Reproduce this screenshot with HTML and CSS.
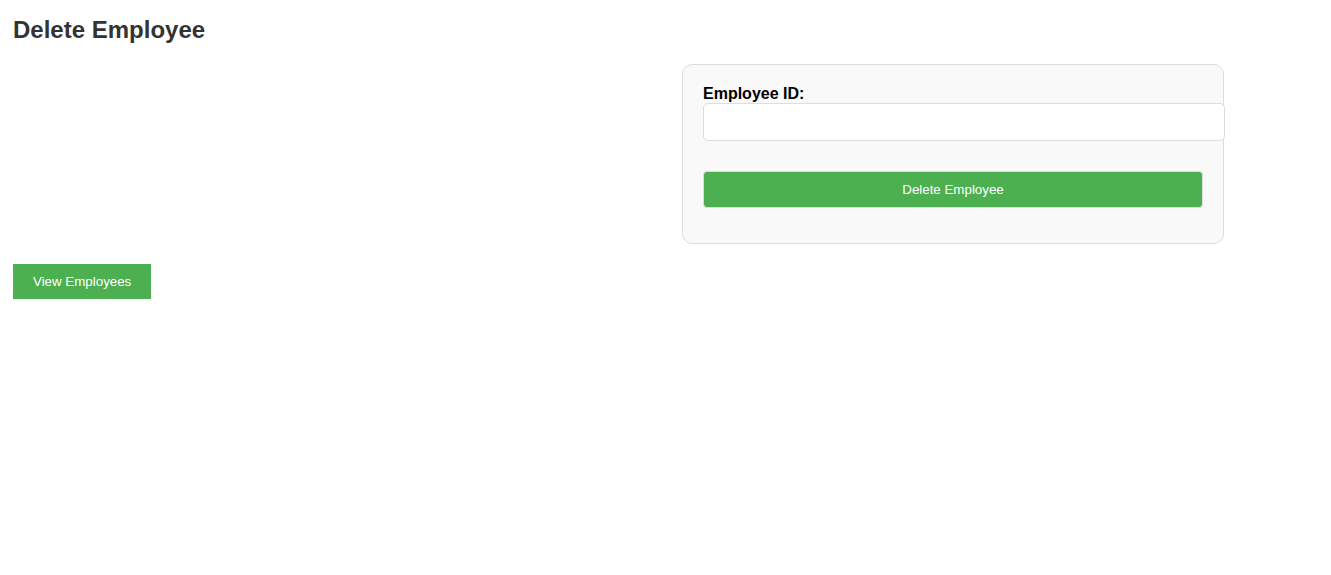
FILE: index.html
```html
<!DOCTYPE html>
<html>
<head>
<meta charset="utf-8">
<title>Delete Employee</title>
<link rel="stylesheet" href="styles.css">
</head>
<body>
<h2 class="title">Delete Employee</h2>
<div class="layout">
  <div class="spacer"></div>
  <form class="card">
    <label class="label" for="empId">Employee ID:</label>
    <input class="input" id="empId" type="text">
    <button class="btn-delete" type="button">Delete Employee</button>
  </form>
</div>
<a class="btn-view" href="#">View Employees</a>
</body>
</html>
```
FILE: styles.css
```css
body {
  margin: 0;
  padding: 0 13px;
  font-family: "Liberation Sans", Arial, sans-serif;
  background: #fff;
}
.title {
  margin: 16px 0 0;
  font-size: 24px;
  line-height: 28px;
  font-weight: bold;
  color: #333;
}
.layout {
  display: grid;
  grid-template-columns: 669px 542px;
  margin-top: 20px;
}
.card {
  box-sizing: border-box;
  width: 542px;
  padding: 20px 20px 14px;
  background: #f9f9f9;
  border: 1px solid #ddd;
  border-radius: 10px;
}
.label {
  display: block;
  font-size: 16px;
  line-height: 18px;
  font-weight: bold;
  color: #000;
}
.input {
  display: block;
  box-sizing: border-box;
  width: calc(100% + 22px);
  height: 38px;
  padding: 0 10px;
  margin: 0 0 30px;
  border: 1px solid #ddd;
  border-radius: 5px;
  background: #fff;
  font-size: 16px;
}
.btn-delete {
  display: block;
  width: 100%;
  height: 37px;
  margin: 0 0 21px;
  border: 1px solid #ddd;
  border-radius: 4px;
  background: #4caf50;
  color: #fff;
  font-family: "Liberation Sans", Arial, sans-serif;
  font-size: 13.333px;
}
.btn-view {
  display: inline-block;
  margin-top: 20px;
  padding: 0 20px;
  height: 35px;
  line-height: 35px;
  background: #4caf50;
  color: #fff;
  font-size: 13.333px;
  text-decoration: none;
}
```
